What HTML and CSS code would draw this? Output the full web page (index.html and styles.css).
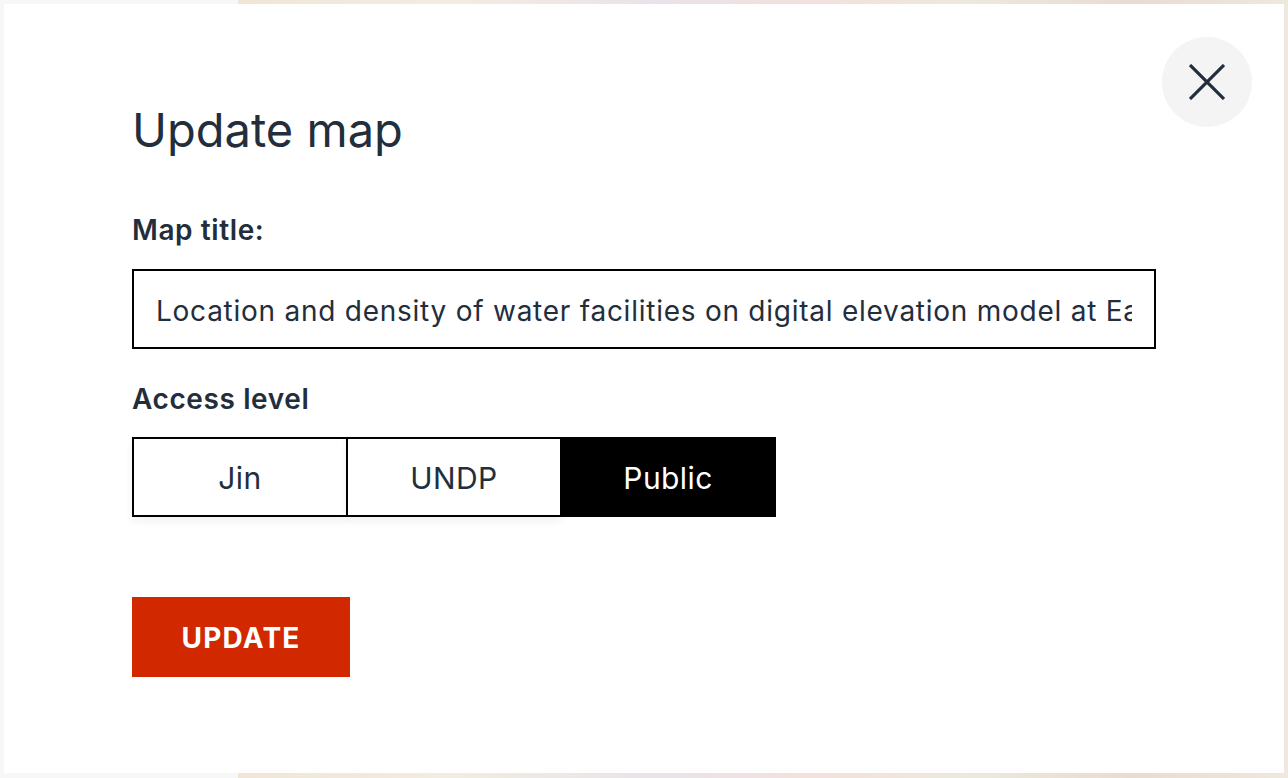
FILE: index.html
```html
<!DOCTYPE html>
<html lang="en">
<head>
<meta charset="utf-8">
<title>Update map</title>
<link rel="stylesheet" href="styles.css">
</head>
<body>
<div class="backdrop">
  <aside class="sidebar"></aside>
  <div class="map"></div>
</div>
<div class="modal" role="dialog" aria-labelledby="modal-title">
  <button class="close" aria-label="Close">
    <svg width="36" height="36" viewBox="0 0 36 36"><path d="M1 1 L35 35 M35 1 L1 35" stroke="#232e3d" stroke-width="3.2" fill="none"/></svg>
  </button>
  <div class="content">
    <h1 class="title" id="modal-title">Update map</h1>
    <label class="label" for="map-title">Map title:</label>
    <input class="text-input" id="map-title" type="text" value="Location and density of water facilities on digital elevation model at East Africa">
    <div class="label label-access">Access level</div>
    <div class="segments">
      <button class="seg">Jin</button>
      <button class="seg">UNDP</button>
      <button class="seg seg-active">Public</button>
    </div>
    <button class="primary">UPDATE</button>
  </div>
</div>
</body>
</html>
```
FILE: styles.css
```css
* { box-sizing: border-box; }
html, body { margin: 0; padding: 0; }
body {
  width: 1288px;
  height: 778px;
  overflow: hidden;
  font-family: "Inter", "Open Sans", sans-serif;
  color: #232e3d;
  position: relative;
}
.backdrop {
  display: flex;
  height: 778px;
}
.sidebar {
  width: 238px;
  background: #f7f7f7;
}
.map {
  flex: 1;
  background: linear-gradient(90deg, #efe6d6 0%, #f3ece0 20%, #e9e3ea 40%, #f3e1dc 55%, #ece9dc 70%, #e8dcd0 85%, #efe8dc 100%);
}
.modal {
  position: absolute;
  left: 4px;
  top: 4px;
  width: 1280px;
  height: 769px;
  background: #ffffff;
}
.close {
  position: absolute;
  left: 1158px;
  top: 33px;
  width: 90px;
  height: 90px;
  border-radius: 50%;
  border: none;
  background: #f4f4f4;
  display: flex;
  align-items: center;
  justify-content: center;
  padding: 0;
  cursor: pointer;
}
.close svg { display: block; }
.content {
  padding: 98px 0 0 128px;
  display: flex;
  flex-direction: column;
  align-items: flex-start;
}
.title {
  margin: 0;
  font-size: 47px;
  line-height: 56px;
  font-weight: 400;
}
.label {
  margin-top: 57px;
  font-size: 28px;
  line-height: 30px;
  font-weight: 600;
  letter-spacing: 0.6px;
}
.label-access { margin-top: 35px; }
.text-input {
  margin-top: 24px;
  width: 1024px;
  height: 80px;
  border: 2px solid #000;
  padding: 3px 22px 0;
  font-family: inherit;
  font-size: 28px;
  letter-spacing: 0.75px;
  color: #232e3d;
  background: #fff;
  outline: none;
}
.segments {
  margin-top: 23px;
  display: flex;
}
.seg {
  width: 216px;
  height: 80px;
  border: 2px solid #000;
  background: #fff;
  font-family: inherit;
  font-size: 30px;
  letter-spacing: 0.4px;
  color: #232e3d;
  box-shadow: 0 4px 8px rgba(0,0,0,0.06);
  padding: 2px 0 0;
}
.seg + .seg { margin-left: -2px; }
.seg-active {
  background: #000;
  color: #fff;
  box-shadow: none;
}
.primary {
  margin-top: 80px;
  width: 218px;
  height: 80px;
  border: none;
  background: #d12800;
  color: #fff;
  font-family: inherit;
  font-size: 28px;
  font-weight: 700;
  letter-spacing: 1.2px;
  padding: 2px 0 0;
}
```
